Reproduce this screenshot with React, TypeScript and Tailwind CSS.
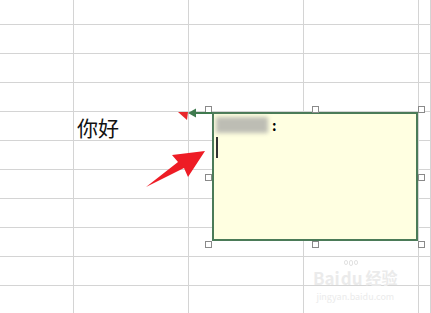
import React from 'react';

const colWidths = ['w-[74px]', 'w-[115px]', 'w-[115px]', 'w-[115px]', 'w-[12px]'];
const rows = 11;

function Handle({ className }: { className: string }) {
    return <div className={`absolute h-[7px] w-[7px] border border-[#8a8a8a] bg-white ${className}`} />;
}

export default function App() {
    return (
        <div className="relative h-[313px] w-[431px] overflow-hidden bg-white" style={{ fontFamily: '"Noto Sans CJK SC", "Liberation Sans", sans-serif' }}>
            {/* sheet grid */}
            <div className="flex flex-col">
                {Array.from({ length: rows }).map((_, r) => (
                    <div key={r} className={`flex ${r === 0 ? 'h-[25px]' : 'h-[29px]'}`}>
                        {colWidths.map((w, c) => (
                            <div key={c} className={`${w} shrink-0 border-b border-r border-[#d4d4d4] flex items-center`}>
                                {r === 4 && c === 1 && (
                                    <span className="pl-[3px] pt-[2px] text-[21px] leading-none text-[#111]">你好</span>
                                )}
                            </div>
                        ))}
                    </div>
                ))}
            </div>

            {/* comment box */}
            <div className="absolute left-[212px] top-[112px] h-[129px] w-[206px] border-2 border-[#4b7b58] bg-[#ffffe1]">
                <div className="flex items-center gap-[4px] pl-[2px] pt-[3px]">
                    <div className="h-[16px] w-[52px] bg-[#bdbdb4] blur-[2px]" />
                    <span className="text-[14px] font-bold leading-none text-black">:</span>
                </div>
                <div className="ml-[2px] mt-[4px] h-[21px] w-[2px] bg-[#333]" />
            </div>

            <Handle className="left-[205px] top-[106px]" />
            <Handle className="left-[312px] top-[106px]" />
            <Handle className="left-[418px] top-[106px]" />
            <Handle className="left-[205px] top-[174px]" />
            <Handle className="left-[418px] top-[174px]" />
            <Handle className="left-[205px] top-[241px]" />
            <Handle className="left-[312px] top-[241px]" />
            <Handle className="left-[418px] top-[241px]" />

            {/* annotations */}
            <svg className="pointer-events-none absolute left-0 top-0" width="431" height="313" viewBox="0 0 431 313">
                <polygon points="178,112 188,112 187,120" fill="#e8262a" />
                <polygon points="188,113 196,108.5 196,117.5" fill="#3f7a4f" />
                <rect x="195" y="112" width="17" height="2" fill="#3f7a4f" />
                <polygon points="205,151 188,177 184,168 146,187 178,162 172,155" fill="#ee1c25" />
            </svg>

            {/* watermark */}
            <div className="absolute left-[313px] top-[269px] flex flex-col items-center gap-[6px] text-[#ebebeb]">
                <div className="flex items-end gap-[1px] text-[17px] font-bold leading-[17px]">
                    <span>Bai</span>
                    <span className="relative">
                        du
                        <span className="absolute -top-[9px] left-[3px] flex gap-[1px]">
                            <span className="h-[5px] w-[4px] rounded-full border border-[#e2e2e2]" />
                            <span className="h-[6px] w-[4px] rounded-full border border-[#e2e2e2]" />
                            <span className="h-[5px] w-[4px] rounded-full border border-[#e2e2e2]" />
                        </span>
                    </span>
                    <span className="ml-[2px] text-[16px]">经验</span>
                </div>
                <span className="text-[9px] leading-[9px]">jingyan.baidu.com</span>
            </div>
        </div>
    );
}
